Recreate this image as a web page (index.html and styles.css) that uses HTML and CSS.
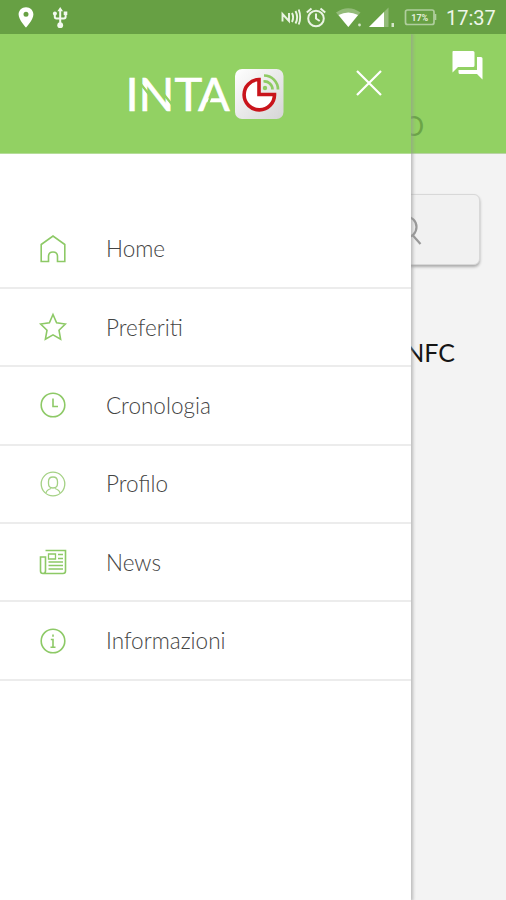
FILE: index.html
```html
<!DOCTYPE html>
<html lang="it">
<head>
<meta charset="utf-8">
<title>INTA</title>
<link rel="stylesheet" href="styles.css">
</head>
<body>
<div class="screen">
  <header class="status">
    <svg class="status-left" width="80" height="34" viewBox="0 0 80 34">
      <path fill="#fff" fill-rule="evenodd" d="M26 7.2c-4.3 0-7.4 3.2-7.4 7.2 0 5.200 7.400 13 7.400 13s7.400-7.800 7.400-13c0-4-3.100-7.200-7.400-7.200zm0 4.600a2.500 2.500 0 1 1 0 5 2.500 2.500 0 0 1 0-5z"/>
      <g fill="none" stroke="#f3f9ef" stroke-width="2"><path d="M60.200 9v16M54.800 13.500v3.300q0 1.700 1.700 1.700h7.400q1.700 0 1.700-1.700v-3.300"/></g>
      <g fill="#f3f9ef"><path d="M57.400 11.200 60.200 7l2.800 4.200zM63.700 11.500h3.600v3.600h-3.600z"/><circle cx="54.900" cy="13.500" r="2"/><circle cx="60.200" cy="25.200" r="2.900"/></g>
    </svg>
    <svg class="status-icons" width="165" height="34" viewBox="275 0 165 34">
      <g fill="none" stroke="#eaf4e3" stroke-width="2">
        <path d="M282.500 21.500v-7.500l6.500 7V13M292 13q2.300 4.200 0 9M295.500 11q3.400 6.500 0 12.500M298.700 9.500q3 8 0 15" stroke-width="1.900"/>
        <circle cx="316" cy="18.500" r="7.800"/><path d="M316 13.500v5l3.700 2.500M306.800 12.500l4.700-4M325.200 12.500l-4.700-4"/>
      </g>
      <path fill="#93bb79" d="M336 12.500q12.200-8.500 24.500 0L348.300 27z"/>
      <path fill="#fff" d="M338.500 15q9.800-5 19.600 0L348.300 27z"/><circle cx="359.500" cy="25" r="1.400" fill="#d5e6ca"/>
      <path fill="#93bb79" d="M369 27 388.500 7.500V27z"/><path fill="#fff" d="M369 27 384 12v15z"/><path fill="#d5e6ca" d="M391.500 23h2.500v4h-2.500z"/>
      <rect x="405.500" y="10" width="28.500" height="14.500" rx="2" fill="none" stroke="#b0ce9e" stroke-width="1.700"/><path fill="#b0ce9e" d="M434.500 14h1.800v6h-1.800z"/>
      <text class="battery" x="419.800" y="20.800" text-anchor="middle">17%</text>
    </svg>
    <time class="time">17:37</time>
  </header>
  <main class="content">
    <section class="page">
      <div class="toolbar">
        <svg class="chat" width="34" height="32" viewBox="0 0 34 32"><path fill="#fff" d="M2 1h20a1.500 1.500 0 0 1 1.500 1.500v13A1.500 1.500 0 0 1 22 17H7l-5.500 5.500V2A1 1 0 0 1 2 1zM26 7h4a1.500 1.500 0 0 1 1.500 1.500v21L26 24H9a1.500 1.500 0 0 1-1.500-1.500V20H26z"/></svg>
        <span class="tab">O</span>
      </div>
      <div class="search">
        <svg width="36" height="36" viewBox="0 0 36 36" fill="none" stroke="#999" stroke-width="2.200"><circle cx="12" cy="14" r="10.500"/><path d="m18.500 22 8 9"/></svg>
      </div>
      <div class="nfc">NFC</div>
    </section>
    <aside class="drawer">
      <div class="brand">
        <svg class="logo" width="170" height="66" viewBox="116 61 170 66">
          <defs><linearGradient id="tile" x1="0" y1="0" x2="1" y2="1"><stop stop-color="#fff"/><stop offset="1" stop-color="#d5d5d5"/></linearGradient></defs>
          <text class="wordmark" y="111" x="125.500 138.500 174.500 198">INTA</text>
          <path class="cut" d="M140 83 149.500 95M164 94.500 174 107M207.500 105 214 88"/>
          <rect x="235" y="69" width="48.500" height="50" rx="7" fill="url(#tile)"/>
          <path d="M259 79.500A15.200 15.200 0 1 0 274.500 94.500H259z" fill="#fff" stroke="#c9141b" stroke-width="3.600"/>
          <g fill="none" stroke="#8fcb63" stroke-width="2.700"><path d="M264 75.500a14 14 0 0 1 14 14M263.500 81.500a8 8 0 0 1 9 8"/></g><circle cx="265" cy="88" r="2.200" fill="#8fcb63"/>
        </svg>
        <svg class="close" width="28" height="28" viewBox="0 0 28 28"><path d="m2 2 24 24M26 2 2 26" stroke="#fff" stroke-width="2.200"/></svg>
      </div>
      <nav class="menu">
        <a class="item"><svg class="icon" viewBox="0 0 30 30"><path d="M3.200 27.500V10.500L15 2l11.800 8.500v17h-7.300v-5q0-4.500-4.500-4.500t-4.500 4.500v5z"/></svg>Home</a>
        <a class="item"><svg class="icon" viewBox="0 0 30 30"><path d="m15 2.500 3.600 8.300 8.700 1.200-6.300 6.200 1.600 9-7.600-4.300-7.600 4.300 1.600-9L2.700 12l8.700-1.200z"/></svg>Preferiti</a>
        <a class="item"><svg class="icon" viewBox="0 0 30 30"><circle cx="15" cy="15" r="11.800"/><path d="M15 8.500v8h5"/></svg>Cronologia</a>
        <a class="item"><svg class="icon thin" viewBox="0 0 30 30"><circle cx="15" cy="15" r="11.800"/><path d="M10.500 12.500q0-4.500 4.500-4.500t4.500 4.500v2q0 4.500-4.500 4.500t-4.500-4.500zM8 24q.5-3 5-4.500M22 24q-.5-3-5-4.500"/></svg>Profilo</a>
        <a class="item"><svg class="icon" viewBox="0 0 30 30"><path d="M7.500 3.500h20v20.500q0 2.500-2.500 2.500H5q-2.500 0-2.500-2.500V10h5v14q0 2.500-2.500 2.500"/><path d="M10.500 7h7v5h-7zM20 7.500h5M20 11.500h5M10.500 15h14.500M10.500 18.500h14.500M10.500 22h14.500" stroke-width="1.300"/></svg>News</a>
        <a class="item"><svg class="icon" viewBox="0 0 30 30"><circle cx="15" cy="15" r="11.800"/><path d="M15 8.500v2.300M12.800 13.500H15v7.500M12.500 21.300h5"/></svg>Informazioni</a>
      </nav>
    </aside>
  </main>
</div>
</body>
</html>
```
FILE: styles.css
```css
* { box-sizing: border-box; }
body { margin: 0; font-family: Lato, sans-serif; }
.screen { width: 506px; height: 900px; overflow: hidden; display: flex; flex-direction: column; }
.status { position: relative; z-index: 1; height: 34px; background: #67a044; display: flex; align-items: center; }
.status-icons { margin-left: 195px; }
.battery { font: bold 9px Roboto, sans-serif; fill: #e3efdb; }
.time { margin-left: 6px; padding-top: 2px; font: 20px Roboto, sans-serif; color: #eef6e9; }
.content { position: relative; flex: 1; }
.page { height: 100%; background: #f3f3f3; }
.toolbar { height: 120px; background: #92d163; display: flex; flex-direction: column; align-items: flex-end; padding-top: 16px; border-bottom: 1px solid #b9d3a5; }
.chat { margin-right: 21px; }
.tab { margin: 28px 82px 0 0; font-size: 26px; line-height: 32px; color: #6ba447; }
.search { width: 100px; height: 71px; margin: 40px 26px 0 auto; border: 1px solid #d8d8d8; border-radius: 6px; background: #f1f1f1; box-shadow: 0 2px 3px rgba(0,0,0,.3); padding: 18px 0 0 13px; }
.nfc { margin: 72px 51px 0 0; text-align: right; font-size: 25px; line-height: 30px; color: #151515; }
.drawer { position: absolute; inset: 0 auto 0 0; width: 411px; background: #fff; box-shadow: 1px 0 3px 1px rgba(150,150,150,.6); }
.brand { height: 120px; background: #92d163; display: flex; align-items: flex-start; padding: 27px 28px 0 116px; border-bottom: 1px solid #b5dd98; }
.logo { overflow: visible; }
.close { margin: 8px 0 0 auto; }
.wordmark { font: 47px Lato, sans-serif; fill: #fff; stroke: #fff; stroke-width: .6; }
.cut { stroke: #92d163; stroke-width: 2.2; fill: none; }
.menu { padding-top: 56.500px; }
.item { height: 78.400px; display: flex; align-items: center; padding-left: 38px; border-bottom: 2px solid #ececec; font-size: 22.500px; font-weight: 300; color: #444; }
.icon { width: 30px; height: 30px; margin-right: 38px; fill: none; stroke: #8dc966; stroke-width: 1.600; }
.thin { stroke: #a4d184; stroke-width: 1.300; }
```
